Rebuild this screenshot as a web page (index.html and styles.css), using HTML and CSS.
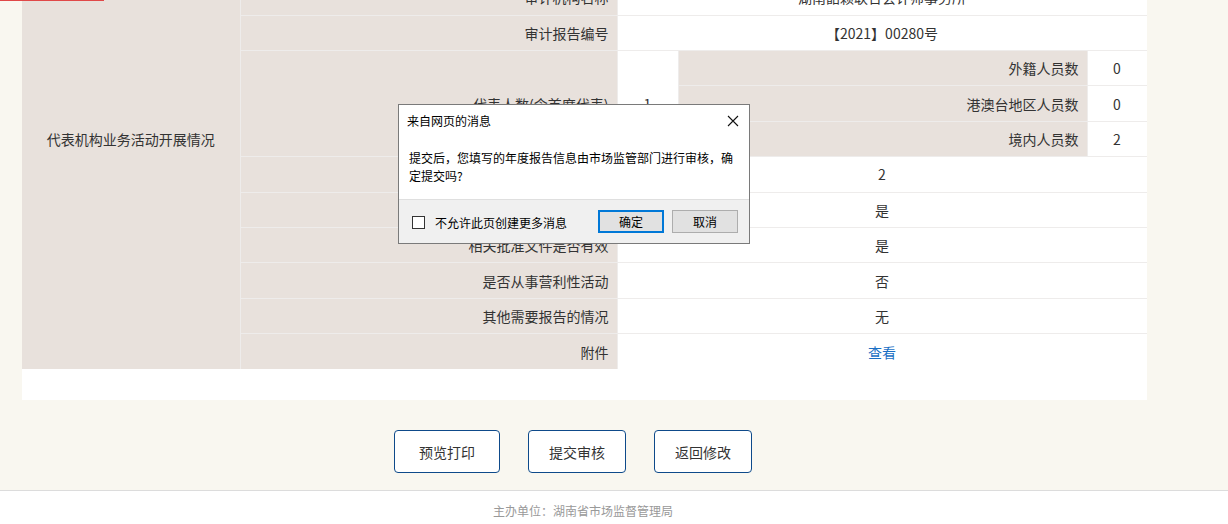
FILE: index.html
```html
<!DOCTYPE html>
<html lang="zh">
<head>
    <meta charset="UTF-8">
    <meta name="viewport" content="width=device-width, initial-scale=1.0">
    <title>年度报告</title>
    <link rel="stylesheet" href="styles.css">
</head>
<body>
<div class="loading-bar"></div>
<div class="page">
    <div class="panel">
        <table class="report">
            <colgroup>
                <col class="col-group">
                <col class="col-label">
                <col class="col-num">
                <col class="col-sublabel">
                <col class="col-subvalue">
            </colgroup>
            <tr>
                <td class="group" rowspan="14">代表机构业务活动开展情况</td>
                <td class="label">代表机构年度费用(万元)</td>
                <td class="value" colspan="3">12.5</td>
            </tr>
            <tr>
                <td class="label">是否经过审计</td>
                <td class="value" colspan="3">是</td>
            </tr>
            <tr>
                <td class="label">审计机构名称</td>
                <td class="value" colspan="3">湖南韶颖联合会计师事务所</td>
            </tr>
            <tr>
                <td class="label">审计报告编号</td>
                <td class="value" colspan="3">【2021】00280号</td>
            </tr>
            <tr>
                <td class="label" rowspan="3">代表人数(含首席代表)</td>
                <td class="value" rowspan="3">1</td>
                <td class="label">外籍人员数</td>
                <td class="value">0</td>
            </tr>
            <tr>
                <td class="label">港澳台地区人员数</td>
                <td class="value">0</td>
            </tr>
            <tr>
                <td class="label">境内人员数</td>
                <td class="value">2</td>
            </tr>
            <tr>
                <td class="label">代表机构办公场所数</td>
                <td class="value" colspan="3">2</td>
            </tr>
            <tr>
                <td class="label">是否按期办理登记</td>
                <td class="value" colspan="3">是</td>
            </tr>
            <tr>
                <td class="label">相关批准文件是否有效</td>
                <td class="value" colspan="3">是</td>
            </tr>
            <tr>
                <td class="label">是否从事营利性活动</td>
                <td class="value" colspan="3">否</td>
            </tr>
            <tr>
                <td class="label">其他需要报告的情况</td>
                <td class="value" colspan="3">无</td>
            </tr>
            <tr>
                <td class="label">附件</td>
                <td class="value" colspan="3"><a class="link" href="#">查看</a></td>
            </tr>
        </table>
    </div>

    <div class="actions">
        <button class="btn btn-wide">预览打印</button>
        <button class="btn">提交审核</button>
        <button class="btn">返回修改</button>
    </div>
</div>

<div class="footer"><span class="footer-text">主办单位：湖南省市场监督管理局</span></div>

<div class="dialog">
    <div class="dialog-title">
        <span>来自网页的消息</span>
        <svg class="dialog-close" width="12" height="12" viewBox="0 0 12 12">
            <path d="M1 1 L11 11 M11 1 L1 11" stroke="#111" stroke-width="1.1" fill="none"/>
        </svg>
    </div>
    <div class="dialog-body">提交后，您填写的年度报告信息由市场监管部门进行审核，确定提交吗?</div>
    <div class="dialog-foot">
        <label class="dialog-check"><span class="box"></span>不允许此页创建更多消息</label>
        <div class="dialog-buttons">
            <button class="dbtn dbtn-primary">确定</button>
            <button class="dbtn">取消</button>
        </div>
    </div>
</div>
</body>
</html>
```

FILE: styles.css
```css
body {
    margin: 0;
    background-color: #f9f7f0;
    font-family: "Noto Sans CJK SC", "Microsoft YaHei", sans-serif;
    color: #333;
    overflow: hidden;
}
.loading-bar {
    position: absolute;
    top: 0;
    left: 0;
    width: 104px;
    height: 1px;
    background: #e04848;
    z-index: 5;
}
.page {
    width: 1170px;
}
.panel {
    margin: 0 23px 0 22px;
    background: #fff;
    padding-bottom: 31px;
    overflow: hidden;
}
.report {
    width: 1125px;
    margin-top: -91px;
    border-collapse: collapse;
    table-layout: fixed;
    font-size: 14px;
}
.col-group    { width: 218px; }
.col-label    { width: 377px; }
.col-num      { width: 61px; }
.col-sublabel { width: 409px; }
.col-subvalue { width: 60px; }
.report tr {
    height: 35.4px;
}
.report td {
    padding: 0 8px;
    border: 1px solid #eeeceb;
    line-height: 20px;
}
.report tr:first-child td { border-top: none; }
.report td.group {
    background: #e8e1dc;
    text-align: center;
    border-left: none;
    border-bottom: none;
}
.report td.label {
    background: #e8e1dc;
    text-align: right;
}
.report td.value {
    text-align: center;
    background: #fff;
}
.report tr:last-child td { border-bottom: none; }
.link {
    color: #1a6fc4;
    text-decoration: none;
}
.actions {
    display: flex;
    justify-content: center;
    gap: 28px;
    padding: 30px 24px 17px 0;
}
.btn {
    width: 98px;
    height: 43px;
    background: #fff;
    border: 1px solid #0e4a8a;
    border-radius: 4px;
    font-family: inherit;
    font-size: 14px;
    color: #333;
}
.btn-wide {
    width: 106px;
}
.footer {
    border-top: 1px solid #dcdcdc;
    background: #fff;
    height: 40px;
}
.footer-text {
    display: block;
    width: 1166px;
    text-align: center;
    font-size: 12px;
    line-height: 40px;
    color: #999;
}
.dialog {
    position: absolute;
    left: 398px;
    top: 104px;
    width: 350px;
    background: #fff;
    border: 1px solid #7a7a7a;
    font-size: 12px;
    color: #000;
    z-index: 10;
}
.dialog-title {
    display: flex;
    justify-content: space-between;
    align-items: center;
    height: 30px;
    padding: 0 10px 0 8px;
}
.dialog-close {
    margin-top: 1px;
}
.dialog-body {
    padding: 14px 8px 14px 10px;
    line-height: 18px;
    height: 36px;
}
.dialog-foot {
    display: flex;
    justify-content: space-between;
    align-items: center;
    height: 43px;
    background: #f0f0f0;
    border-top: 1px solid #dfdfdf;
    padding: 0 11px 0 13px;
}
.dialog-check {
    display: flex;
    align-items: center;
    gap: 10px;
    margin-top: 2px;
}
.box {
    width: 11px;
    height: 11px;
    border: 1px solid #333;
    background: #fff;
}
.dialog-buttons {
    display: flex;
    gap: 8px;
}
.dbtn {
    width: 66px;
    height: 23px;
    background: #e1e1e1;
    border: 1px solid #adadad;
    font-family: inherit;
    font-size: 12px;
    color: #000;
    padding: 0;
}
.dbtn-primary {
    border: 2px solid #0078d7;
}
```
